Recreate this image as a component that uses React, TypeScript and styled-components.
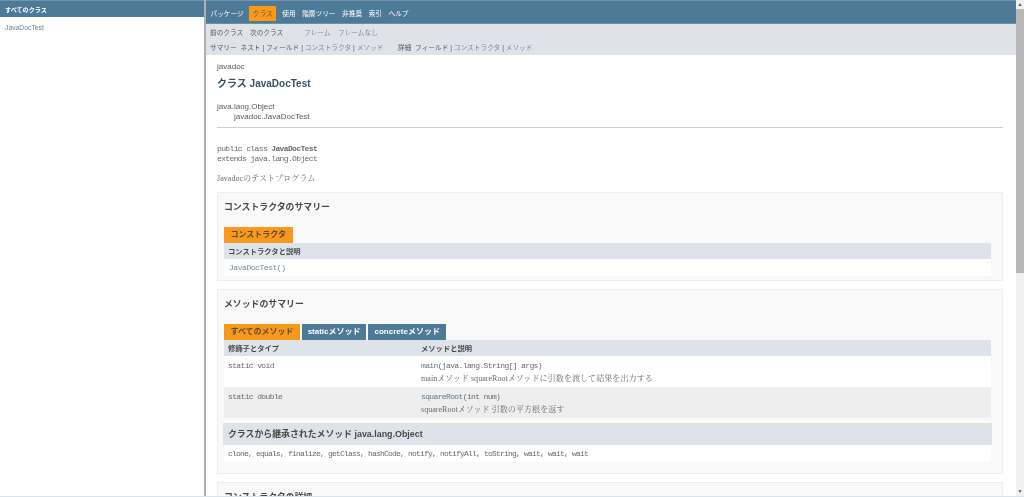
import React from 'react';
import styled, { createGlobalStyle } from 'styled-components';

const sans = `"Liberation Sans", "Noto Sans CJK JP", sans-serif`;
const mono = `"Liberation Mono", "Noto Sans CJK JP", monospace`;
const serif = `"Liberation Serif", "Noto Serif CJK JP", "Noto Sans CJK JP", serif`;

const navItems = ['パッケージ', 'クラス', '使用', '階層ツリー', '非推奨', '索引', 'ヘルプ'];

const constructors = ['JavaDocTest()'];

const methods = [
    {
        type: 'static void',
        name: 'main',
        args: '(java.lang.String[] args)',
        desc: 'mainメソッド squareRootメソッドに引数を渡して結果を出力する',
    },
    {
        type: 'static double',
        name: 'squareRoot',
        args: '(int num)',
        desc: 'squareRootメソッド 引数の平方根を返す',
    },
];

const App: React.FC = () => {
    return (
        <Frames>
            <GlobalStyle />
            <ClassFrame>
                <FrameTitle>すべてのクラス</FrameTitle>
                <ClassLink>JavaDocTest</ClassLink>
            </ClassFrame>
            <Divider />
            <MainFrame>
                <TopNav>
                    {navItems.map((item) => (
                        <NavItem key={item} $active={item === 'クラス'}>{item}</NavItem>
                    ))}
                </TopNav>
                <SubNav>
                    <SubNavRow>
                        <SubNavText $width={40}>前のクラス</SubNavText>
                        <SubNavText $width={54}>次のクラス</SubNavText>
                        <SubNavLink $width={34}>フレーム</SubNavLink>
                        <SubNavLink>フレームなし</SubNavLink>
                    </SubNavRow>
                    <SubNavRow>
                        <SubNavText $width={188}>サマリー&nbsp; ネスト | フィールド | <SubNavLink>コンストラクタ</SubNavLink> | <SubNavLink>メソッド</SubNavLink></SubNavText>
                        <SubNavText>詳細&nbsp; フィールド | <SubNavLink>コンストラクタ</SubNavLink> | <SubNavLink>メソッド</SubNavLink></SubNavText>
                    </SubNavRow>
                </SubNav>
                <Content>
                    <PackageName>javadoc</PackageName>
                    <ClassTitle>クラス JavaDocTest</ClassTitle>
                    <Inheritance>
                        <div>java.lang.Object</div>
                        <InheritanceChild>javadoc.JavaDocTest</InheritanceChild>
                    </Inheritance>
                    <Rule />
                    <Signature>
                        <div>public class <strong>JavaDocTest</strong></div>
                        <div>extends java.lang.Object</div>
                    </Signature>
                    <ClassDesc>Javadocのテストプログラム</ClassDesc>

                    <Section>
                        <SectionTitle>コンストラクタのサマリー</SectionTitle>
                        <Tabs>
                            <Tab $active $pad={6.5}>コンストラクタ</Tab>
                        </Tabs>
                        <HeaderRow>
                            <span>コンストラクタと説明</span>
                        </HeaderRow>
                        {constructors.map((c) => (
                            <ConstructorRow key={c}>{c}</ConstructorRow>
                        ))}
                    </Section>

                    <Section>
                        <SectionTitle>メソッドのサマリー</SectionTitle>
                        <Tabs>
                            <Tab $active $pad={6.5}>すべてのメソッド</Tab>
                            <Tab $pad={5.5}>staticメソッド</Tab>
                            <Tab $pad={6.5}>concreteメソッド</Tab>
                        </Tabs>
                        <HeaderRow>
                            <TypeCell>修飾子とタイプ</TypeCell>
                            <span>メソッドと説明</span>
                        </HeaderRow>
                        {methods.map((m, index) => (
                            <MethodRow key={m.name} $alt={index % 2 === 1}>
                                <TypeCell>{m.type}</TypeCell>
                                <div>
                                    <div><MethodLink>{m.name}</MethodLink>{m.args}</div>
                                    <MethodDesc>{m.desc}</MethodDesc>
                                </div>
                            </MethodRow>
                        ))}
                        <InheritedTitle>クラスから継承されたメソッド java.lang.Object</InheritedTitle>
                        <InheritedList>clone, equals, finalize, getClass, hashCode, notify, notifyAll, toString, wait, wait, wait</InheritedList>
                    </Section>

                    <Section>
                        <SectionTitle>コンストラクタの詳細</SectionTitle>
                    </Section>
                </Content>
            </MainFrame>
            <Scrollbar>
                <ScrollArrow>▲</ScrollArrow>
                <ScrollThumb />
                <ScrollArrow>▼</ScrollArrow>
            </Scrollbar>
        </Frames>
    );
};

const GlobalStyle = createGlobalStyle`
    html, body {
        margin: 0;
        height: 497px;
        overflow: hidden;
        background: #fff;
    }
    * {
        box-sizing: border-box;
    }
`;

const Frames = styled.div`
    display: flex;
    width: 1024px;
    height: 497px;
    overflow: hidden;
    font-family: ${sans};
    color: #595959;
    border-bottom: 1px solid #d5e6ec;
    filter: blur(0.3px);
`;

const ClassFrame = styled.div`
    width: 204px;
    flex: none;
`;

const FrameTitle = styled.div`
    height: 17px;
    line-height: 17px;
    padding-left: 5px;
    background: #4d7a97;
    border-top: 1px solid #7195ac;
    color: #fff;
    font-size: 6.1px;
    font-weight: bold;
`;

const ClassLink = styled.div`
    padding: 5px 0 0 5px;
    font-size: 6.8px;
    line-height: 11px;
    color: #6f8296;
`;

const Divider = styled.div`
    width: 2px;
    flex: none;
    background: #b0b0b0;
`;

const MainFrame = styled.div`
    width: 810px;
    flex: none;
    overflow: hidden;
`;

const TopNav = styled.div`
    height: 24px;
    display: flex;
    align-items: center;
    padding: 2px 0 0 2px;
    background: #4d7a97;
    border-top: 1px solid #7195ac;
    border-bottom: 1px solid #6d8fa6;
`;

const NavItem = styled.span<{ $active?: boolean }>`
    padding: 0 ${(p) => (p.$active ? '3.5px' : '2.5px')};
    margin-left: ${(p) => (p.$active ? '1.5px' : '0')};
    margin-right: ${(p) => (p.$active ? '3.5px' : '1.5px')};
    height: 15px;
    line-height: 15px;
    font-size: 6.7px;
    color: ${(p) => (p.$active ? '#6b5a3a' : '#fff')};
    background: ${(p) => (p.$active ? '#f8981d' : 'transparent')};
`;

const SubNav = styled.div`
    height: 31px;
    padding: 1.5px 0 0 4px;
    background: #dee3e9;
`;

const SubNavRow = styled.div`
    display: flex;
    height: 15px;
    line-height: 14px;
    font-size: 6.7px;
`;

const SubNavText = styled.span<{ $width?: number }>`
    width: ${(p) => (p.$width ? `${p.$width}px` : 'auto')};
    flex: none;
    white-space: pre;
    color: #595959;
`;

const SubNavLink = styled(SubNavText)`
    color: #7a8c9e;
`;

const Content = styled.div`
    padding: 6px 13px 0 11px;
`;

const PackageName = styled.div`
    font-size: 8px;
    line-height: 11px;
`;

const ClassTitle = styled.div`
    margin-top: 5px;
    font-size: 10px;
    line-height: 14px;
    font-weight: bold;
    color: #3a5163;
`;

const Inheritance = styled.div`
    margin-top: 11px;
    font-size: 8px;
    line-height: 10px;
`;

const InheritanceChild = styled.div`
    padding-left: 17px;
`;

const Rule = styled.div`
    height: 1px;
    margin-top: 5px;
    background: #cfcfcf;
`;

const Signature = styled.div`
    margin-top: 16px;
    font-family: ${mono};
    font-size: 8px;
    letter-spacing: -0.63px;
    line-height: 10px;
    color: #6a6a6a;
`;

const ClassDesc = styled.div`
    margin-top: 9px;
    font-family: ${serif};
    font-size: 8.1px;
    line-height: 11px;
    color: #6a6a6a;
`;

const Section = styled.div`
    margin-top: 8px;
    padding: 7px 11px 4px 6px;
    background: #f9f9f9;
    border: 1px solid #ededed;
`;

const SectionTitle = styled.div`
    font-size: 8.9px;
    line-height: 14px;
    font-weight: bold;
    color: #484848;
`;

const Tabs = styled.div`
    display: flex;
    gap: 2px;
    margin-top: 13px;
`;

const Tab = styled.div<{ $active?: boolean; $pad: number }>`
    height: 16px;
    padding: 0 ${(p) => p.$pad}px;
    line-height: 15px;
    font-size: 8px;
    font-weight: bold;
    color: ${(p) => (p.$active ? '#5a4c34' : '#fff')};
    background: ${(p) => (p.$active ? '#f8981d' : '#4d7a97')};
`;

const HeaderRow = styled.div`
    display: flex;
    height: 16px;
    align-items: center;
    padding-left: 4px;
    background: #dee3e9;
    font-size: 7.3px;
    font-weight: bold;
    color: #484848;
`;

const ConstructorRow = styled.div`
    height: 17px;
    padding-left: 5px;
    line-height: 18px;
    background: #fff;
    font-family: ${mono};
    font-size: 8px;
    letter-spacing: -0.45px;
    color: #7a8c9e;
`;

const TypeCell = styled.div`
    width: 193px;
    flex: none;
`;

const MethodRow = styled.div<{ $alt?: boolean }>`
    display: flex;
    height: 31px;
    padding: 5px 0 0 4px;
    background: ${(p) => (p.$alt ? '#eeeeef' : '#fff')};
    font-family: ${mono};
    font-size: 8px;
    letter-spacing: -0.63px;
    line-height: 10px;
    color: #6a6a6a;
`;

const MethodLink = styled.span`
    color: #5f7a92;
`;

const MethodDesc = styled.div`
    margin-top: 3px;
    font-family: ${serif};
    font-size: 8.1px;
    letter-spacing: 0;
    line-height: 10px;
`;

const InheritedTitle = styled.div`
    height: 22px;
    margin: 5px -1px 0 -1px;
    padding-left: 5px;
    line-height: 22px;
    background: #dee3e9;
    font-size: 8.9px;
    font-weight: bold;
    color: #484848;
`;

const InheritedList = styled.div`
    height: 17px;
    margin-bottom: 7px;
    padding-left: 4px;
    line-height: 17px;
    background: #fff;
    font-family: ${mono};
    font-size: 8px;
    letter-spacing: -0.8px;
    color: #6a6a6a;
`;

const Scrollbar = styled.div`
    width: 8px;
    flex: none;
    display: flex;
    flex-direction: column;
    background: #f0f0f0;
`;

const ScrollArrow = styled.div`
    height: 9px;
    line-height: 9px;
    text-align: center;
    font-size: 5px;
    color: #505050;
    background: #f0f0f0;
`;

const ScrollThumb = styled.div`
    height: 264px;
    background: #b8b8b8;
    margin-bottom: auto;
`;

export default App;
